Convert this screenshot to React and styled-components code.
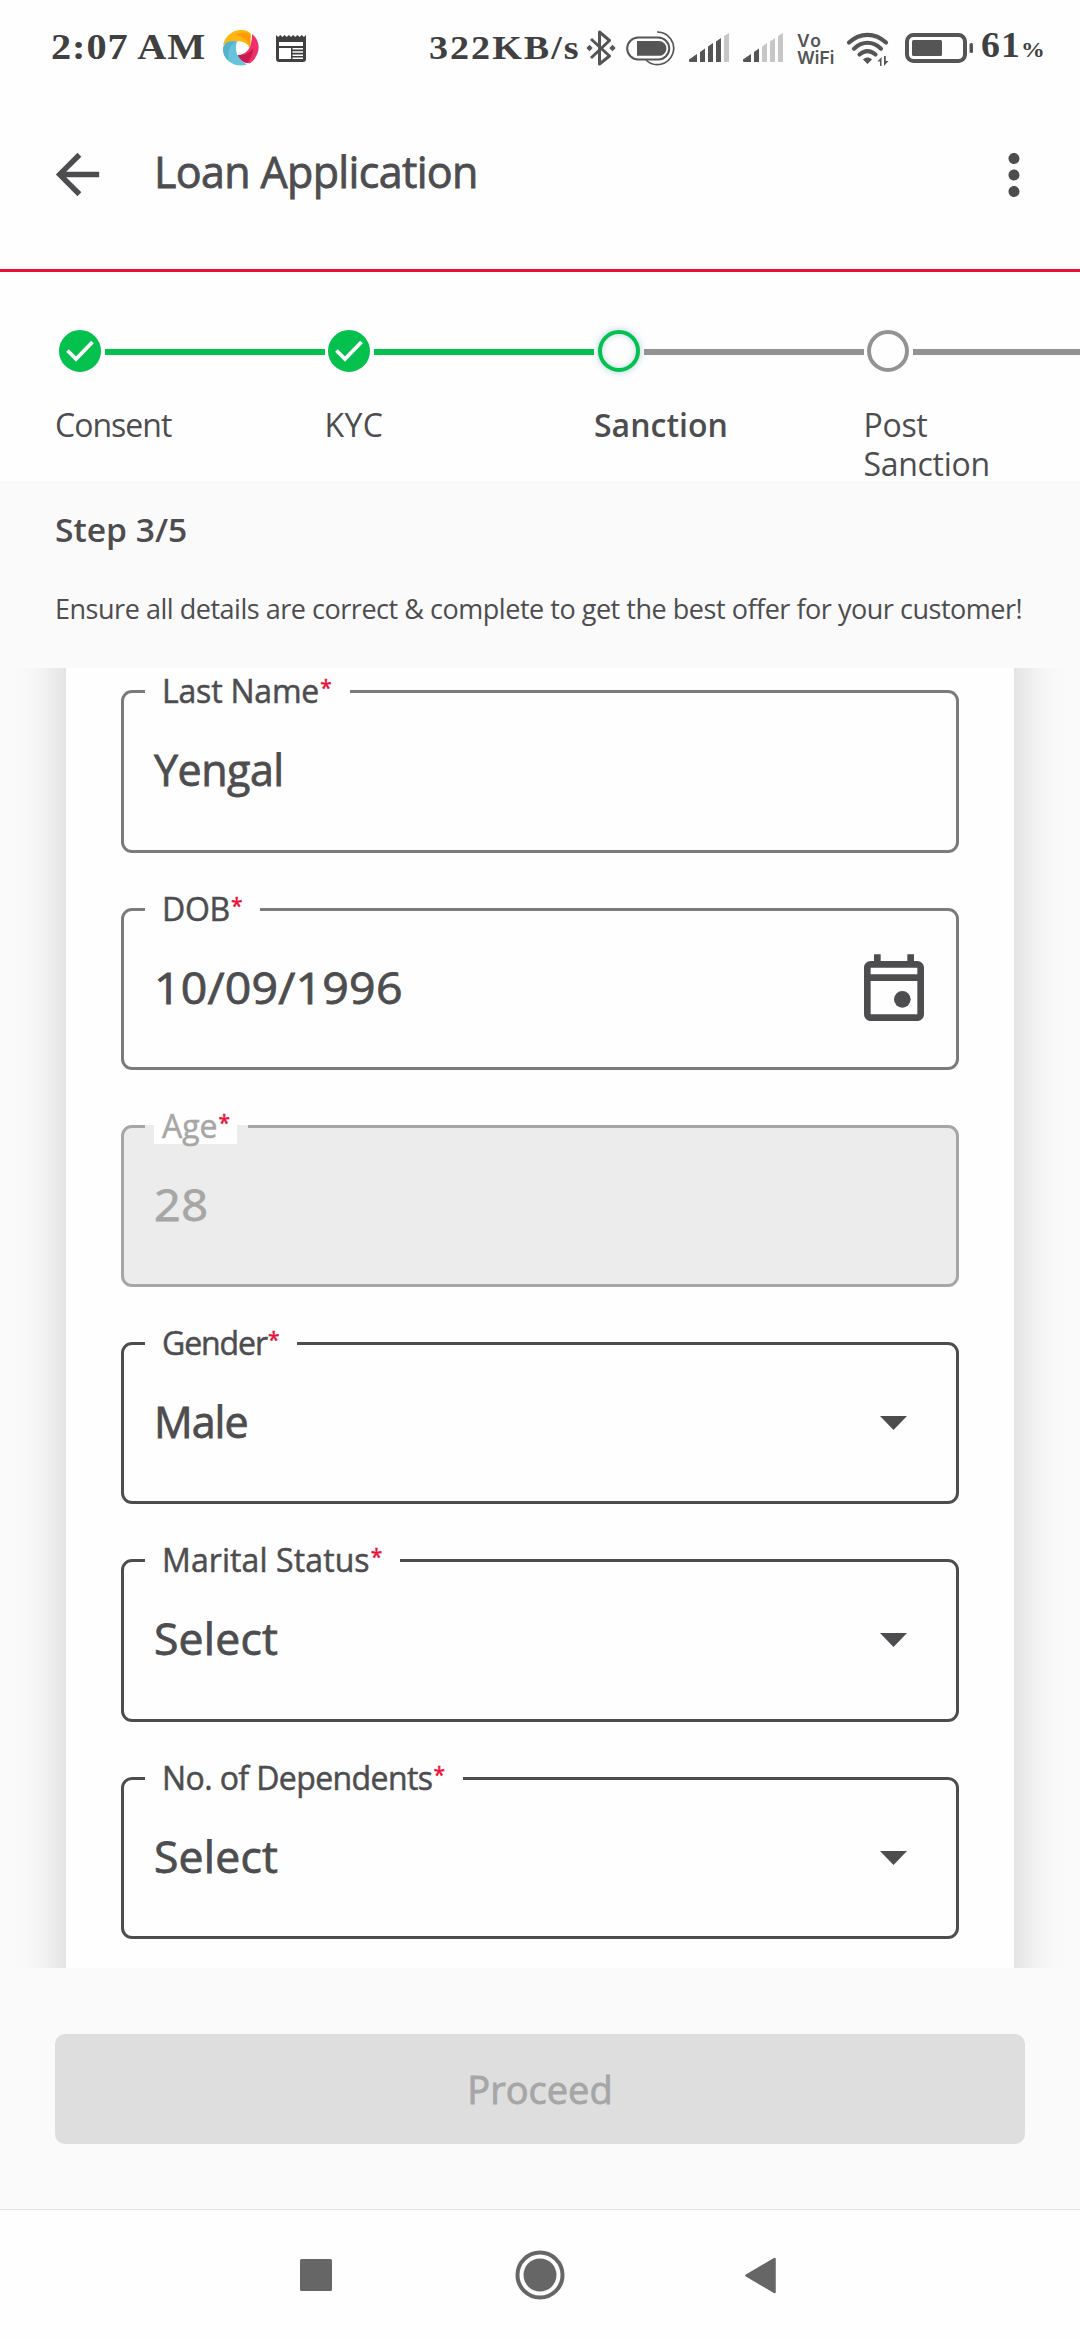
import React from "react";
import styled, { createGlobalStyle } from "styled-components";
import { MdArrowBack, MdMoreVert } from "react-icons/md";

const GREEN = "#04c14e";
const GREY = "#939393";
const INK = "#4d4d4f";
const RED = "#ea1139";

const GlobalStyle = createGlobalStyle`
  * { box-sizing: border-box; }
  body {
    margin: 0;
    background: #fafafa;
    color: ${INK};
    font-family: "Open Sans", "Noto Sans", sans-serif;
    overflow: hidden;
  }
  svg { display: block; flex: none; }
`;

const Screen = styled.div`
  width: 1080px;
  height: 2340px;
  display: flex;
  flex-direction: column;
  overflow: hidden;
`;

/* ---------- status bar ---------- */

const StatusBar = styled.header`
  flex: none;
  height: 95px;
  display: flex;
  align-items: center;
  background: #fefefe;
`;

const StatusText = styled.span`
  flex: none;
  width: ${(p) => p.$width}px;
  margin-left: ${(p) => p.$gap}px;
  font: 700 ${(p) => p.$size}px/95px "Liberation Serif", serif;
  letter-spacing: ${(p) => p.$track}px;
  white-space: nowrap;
  color: #404040;
`;

const Wide = styled.span`
  display: inline-block;
  transform: scaleX(${(p) => p.$stretch});
  transform-origin: left center;
`;

const Percent = styled.small`
  font-size: 22px;
  letter-spacing: 0;
`;

const StatusIcon = styled.span`
  flex: none;
  display: flex;
  margin-left: ${(p) => p.$gap}px;
  margin-top: ${(p) => p.$drop || 0}px;
`;

const VoWifi = styled.span`
  flex: none;
  display: flex;
  flex-direction: column;
  width: 38px;
  margin-left: 14px;
  margin-top: 3px;
  font: 600 17.5px/17px Inter, sans-serif;
  color: #555;
`;

const VoLine = styled.span`
  letter-spacing: ${(p) => p.$track}px;
`;

function Swirl() {
  return (
    <svg width="36" height="36" viewBox="0 0 36 36">
      <path d="M0 15.500C2 6 9.500 0 18 0c5 0 8.500 1.500 9.800 4.200L27 18c-2.500-4.500-8-7.500-13-6.500C9 11 4 12.500 0 15.500Z" fill="#fdb614" />
      <path d="M12 5c6-3 11-3.500 15.700-.5L27 18c-1-7-7-12-15-13Z" fill="#ff9c05" />
      <path d="M29 4c5 3.500 7.500 10 6.300 16.500C34 26 30.500 31 27 33.200c-5 .3-10.500-2.700-12.500-8.200C21 25.500 27 20 28 13c.8-3 1.200-6 1-9Z" fill="#ee3169" />
      <path d="M14.500 25c6 1 12-1.500 16-7-1 6-3 11-6 15-4-.5-8.500-3.500-10-8Z" fill="#c91a4d" />
      <path d="M0 19c0-2.500 1.500-5 4-6.500 3-1.500 6.500-1.500 10-1-1.500 4-1.500 9 .5 13.500 2 4 5 7 9.500 9.500C14 38 0 32 0 19Z" fill="#67c3dc" />
      <path d="M0 19c0-2.500 1.500-5 4-6.500 3-1.500 6.500-1.500 10-1-6 2-9.500 7.500-8.500 19C2 28 0 24 0 19Z" fill="#52b3cb" />
    </svg>
  );
}

function Newspaper() {
  return (
    <svg width="30" height="29" viewBox="0 0 30 29">
      <path d="M0 1l2.100 2L4.300 1l2.100 2L8.600 1l2.100 2 2.200-2L15 3l2.100-2 2.200 2 2.100-2 2.200 2 2.100-2 2.200 2L30 1v24a3 3 0 0 1-3 3H3a3 3 0 0 1-3-3Z" fill="#404040" />
      <path d="M3 8h24v4H3ZM3 14h12v11H3ZM16.500 14H27v1.600H16.500ZM16.500 17.200H27v1.600H16.500ZM16.500 20.400H27V22H16.500ZM16.500 23.500H27V25H16.500Z" fill="#fefefe" />
    </svg>
  );
}

function Bluetooth() {
  return (
    <svg width="30" height="36" viewBox="0 0 30 36">
      <path d="M5 9l18.500 17L13.500 34V2l10 8.500L5 28" fill="none" stroke="#555" strokeWidth="3" strokeLinejoin="round" />
      <path d="M3.500 14.800 6.700 18l-3.200 3.200L.3 18ZM26.500 14.800l3.200 3.200-3.200 3.200-3.200-3.200Z" fill="#555" />
    </svg>
  );
}

function PillToggle() {
  return (
    <svg width="50" height="36" viewBox="0 0 50 36">
      <rect x="1.200" y="7.500" width="42" height="22" rx="11" fill="none" stroke="#555" strokeWidth="2" />
      <path d="M11 11h22a7.300 7.300 0 0 1 0 14.800H11Z" fill="#555" />
      <path d="M31 2a16.300 16.300 0 1 1-11 28" fill="none" stroke="#555" strokeWidth="1.700" />
    </svg>
  );
}

const BARS = [
  "M0 28.500v-2L8 21v8H1Z",
  "M11 29V19l5-3.500V29Z",
  "M19 29V13.500l5-3.500V29Z",
  "M27 29V8.500L32 5v24Z",
  "M35 29V3l5-3v29Z",
];

function Signal({ level }) {
  return (
    <svg width="40" height="29" viewBox="0 0 40 29">
      {BARS.map((d, i) => (
        <path key={d} d={d} fill={i < level ? "#555" : "#c6c6c6"} />
      ))}
    </svg>
  );
}

function Wifi() {
  return (
    <svg width="44" height="35" viewBox="0 0 44 35">
      <g fill="none" stroke="#555" strokeWidth="4.200" strokeLinecap="round">
        <path d="M3 10.500c11-10.300 26-10.300 37 0" />
        <path d="M8 16.700c8.500-7.700 18.500-7.700 27 0" />
        <path d="M13.500 22.500c5.500-4.600 10.500-4.600 16 0" />
      </g>
      <path d="M17 27.500c3-2.600 6-2.600 9 0L21.500 32Z" fill="#555" />
      <path d="M35.500 34v-9L31.500 29.500h2.500V34ZM38 24v10l4.500-5H39.800v-5Z" fill="#555" />
    </svg>
  );
}

function Battery() {
  return (
    <svg width="69" height="30" viewBox="0 0 69 30">
      <rect x="2" y="2" width="58" height="26" rx="6.500" fill="none" stroke="#555" strokeWidth="4" />
      <rect x="7" y="7" width="30" height="16" rx="1.500" fill="#555" />
      <rect x="64.500" y="10" width="3.500" height="10" rx="1.500" fill="#555" />
    </svg>
  );
}

/* ---------- toolbar ---------- */

const Toolbar = styled.div`
  flex: none;
  height: 177px;
  display: flex;
  align-items: center;
  padding: 0 33px 15px 45px;
  background: #fefefe;
  border-bottom: 3px solid ${RED};
`;

const IconButton = styled.button`
  display: flex;
  padding: 0;
  border: 0;
  background: none;
  color: ${INK};
`;

const Title = styled.h1`
  flex: 1;
  margin: 0 0 6px 44px;
  font-size: 43px;
  font-weight: 400;
  line-height: 60px;
  letter-spacing: -0.65px;
  -webkit-text-stroke: 0.8px ${INK};
`;

/* ---------- stepper ---------- */

const Stepper = styled.ol`
  flex: none;
  height: 209px;
  margin: 0;
  padding: 58px 0 0 55px;
  display: flex;
  list-style: none;
  background: #fefefe;
`;

const Step = styled.li`
  flex: none;
  width: 269.5px;
`;

const StepHead = styled.div`
  display: flex;
  align-items: center;
  height: 42px;
`;

const StepDot = styled.span`
  flex: none;
  width: 42px;
  height: 42px;
  margin: 0 3.750px;
  border-radius: 50%;
  display: flex;
  align-items: center;
  justify-content: center;
  border: 4px solid ${(p) => (p.$state === "todo" ? GREY : GREEN)};
  background: ${(p) => (p.$state === "done" ? GREEN : "#fefefe")};
  box-shadow: ${(p) =>
    p.$state === "current" ? "0 0 7px rgba(20,110,160,.35), inset 0 0 6px rgba(20,90,160,.25)" : "none"};
`;

const StepLine = styled.span`
  flex: 1;
  height: 6px;
  margin-top: 2px;
  background: ${(p) => (p.$done ? GREEN : GREY)};
`;

const StepLabel = styled.div`
  width: 140px;
  margin-top: 33px;
  font-size: 32px;
  line-height: 39px;
  font-weight: ${(p) => (p.$current ? 600 : 400)};
  letter-spacing: ${(p) => p.$track}px;
`;

const STEPS = [
  { label: "Consent", state: "done", track: -1 },
  { label: "KYC", state: "done", track: 0.4 },
  { label: "Sanction", state: "current", track: 0 },
  { label: "Post Sanction", state: "todo", track: -0.3 },
];

function Check() {
  return (
    <svg width="30" height="24" viewBox="0 0 30 24">
      <path d="M2.500 11.500 11 20 27.500 3" fill="none" stroke="#fefefe" strokeWidth="3.800" />
    </svg>
  );
}

/* ---------- intro ---------- */

const Intro = styled.section`
  flex: none;
  height: 187px;
  padding: 29px 0 0 55px;
  background: #fafafa;
`;

const StepCount = styled.h2`
  margin: 0 0 41px;
  font-size: 32px;
  line-height: 40px;
  font-weight: 600;
`;

const Hint = styled.p`
  margin: 0;
  font-size: 27px;
  line-height: 36px;
  letter-spacing: -0.47px;
  white-space: nowrap;
`;

/* ---------- form ---------- */

const ScrollArea = styled.main`
  flex: none;
  height: 1299.7px;
  padding: 0 66px;
  overflow: hidden;
  background: #fafafa;
`;

const Card = styled.form`
  margin: -60px 0;
  padding: 66.4px 55px 120px;
  background: #fefefe;
  box-shadow: 0 0 48px rgba(0, 0, 0, 0.18);
`;

const TONES = { input: "#7b7b7b", disabled: "#a6a6a6", select: "#4d4d4f" };

const FieldBox = styled.fieldset`
  height: 178.3px;
  min-width: 0;
  margin: 0 0 38.950px;
  padding: 0 0 0 20.500px;
  border: 3px solid ${(p) => TONES[p.$tone]};
  border-radius: 11px;
  background: ${(p) => (p.$tone === "disabled" ? "#ececec" : "#fefefe")};
  color: ${(p) => (p.$tone === "disabled" ? "#a6a6a6" : INK)};
`;

const Legend = styled.legend`
  padding: 0 11px 0 9.500px;
`;

const LabelText = styled.span`
  display: flex;
  height: 35px;
  padding: 1px 7px 0 8px;
  background: #fefefe;
  font-size: 32px;
  line-height: 32px;
  letter-spacing: ${(p) => p.$track}px;
  -webkit-text-stroke: 0.5px currentColor;
`;

const Required = styled.sup`
  margin-left: 1px;
  font-size: 21px;
  line-height: 24px;
  letter-spacing: 0;
  color: ${RED};
`;

const ValueRow = styled.div`
  height: 120px;
  margin-left: 9.500px;
  padding-top: 2px;
  display: flex;
  align-items: center;
  justify-content: space-between;
`;

const Value = styled.span`
  font-size: 43px;
  line-height: 60px;
  letter-spacing: ${(p) => p.$track}px;
  transform: scaleX(${(p) => p.$stretch});
  transform-origin: left center;
  -webkit-text-stroke: 0.8px currentColor;
`;

const TrailingIcon = styled.span`
  display: flex;
  margin-top: ${(p) => p.$drop}px;
  margin-right: ${(p) => p.$inset}px;
`;

function CalendarIcon() {
  return (
    <TrailingIcon $drop={7} $inset={22.5}>
      <svg width="80" height="80" viewBox="0 0 24 24">
        <path
          fillRule="evenodd"
          fill={INK}
          d="M6 1h2v2h8V1h2v2h1c1.100 0 2 .9 2 2v14c0 1.100-.9 2-2 2H5c-1.100 0-2-.9-2-2V5c0-1.100.9-2 2-2h1ZM5 5v2h14V5ZM5 9v10h14V9Z"
        />
        <circle cx="14.500" cy="14.500" r="2.500" fill={INK} />
      </svg>
    </TrailingIcon>
  );
}

function CaretIcon() {
  return (
    <TrailingIcon $drop={2} $inset={49.5}>
      <svg width="27" height="14" viewBox="0 0 27 14">
        <path d="M0 0h27L13.500 14Z" fill={INK} />
      </svg>
    </TrailingIcon>
  );
}

const FIELDS = [
  { label: "Last Name", value: "Yengal", tone: "input", lt: -0.2, vt: -0.5 },
  { label: "DOB", value: "10/09/1996", tone: "input", lt: -0.3, vt: 0.2, stretch: 1.08, icon: "calendar" },
  { label: "Age", value: "28", tone: "disabled", lt: 0, vt: 0.5, stretch: 1.09 },
  { label: "Gender", value: "Male", tone: "select", lt: -1.1, vt: -1, icon: "caret" },
  { label: "Marital Status", value: "Select", tone: "select", lt: 0.1, vt: 0.2, stretch: 1.035, icon: "caret" },
  { label: "No. of Dependents", value: "Select", tone: "select", lt: -0.6, vt: 0.2, stretch: 1.035, icon: "caret" },
];

function Field({ label, value, tone, lt, vt, stretch = 1, icon }) {
  return (
    <FieldBox $tone={tone}>
      <Legend>
        <LabelText $track={lt}>
          {label}
          <Required>*</Required>
        </LabelText>
      </Legend>
      <ValueRow>
        <Value $track={vt} $stretch={stretch}>
          {value}
        </Value>
        {icon === "calendar" && <CalendarIcon />}
        {icon === "caret" && <CaretIcon />}
      </ValueRow>
    </FieldBox>
  );
}

/* ---------- footer and navigation ---------- */

const Footer = styled.footer`
  flex: 1;
  padding: 66px 55px 0;
  background: #fafafa;
`;

const Proceed = styled.button`
  display: block;
  width: 100%;
  height: 110px;
  padding: 1px 0 0;
  border: 0;
  border-radius: 10px;
  background: #dedede;
  color: #a6a6a6;
  font: 400 38px/60px "Open Sans", sans-serif;
  -webkit-text-stroke: 0.8px #a6a6a6;
`;

const NavBar = styled.nav`
  flex: none;
  height: 131px;
  display: flex;
  align-items: center;
  padding-left: 300px;
  border-top: 1px solid #e2e2e2;
  background: #fefefe;
`;

const NavItem = styled.span`
  display: flex;
  margin-left: ${(p) => p.$gap}px;
`;

export default function App() {
  return (
    <Screen>
      <GlobalStyle />
      <StatusBar>
        <StatusText $gap={51} $width={172} $size={36} $track={0.8}>
          <Wide $stretch={1.12}>2:07 AM</Wide>
        </StatusText>
        <StatusIcon $gap={0}>
          <Swirl />
        </StatusIcon>
        <StatusIcon $gap={17} $drop={2}>
          <Newspaper />
        </StatusIcon>
        <StatusText $gap={123} $width={156.5} $size={34} $track={1.8}>
          <Wide $stretch={1.12}>322KB/s</Wide>
        </StatusText>
        <StatusIcon $gap={0}>
          <Bluetooth />
        </StatusIcon>
        <StatusIcon $gap={10.5}>
          <PillToggle />
        </StatusIcon>
        <StatusIcon $gap={13}>
          <Signal level={4} />
        </StatusIcon>
        <StatusIcon $gap={14}>
          <Signal level={2} />
        </StatusIcon>
        <VoWifi>
          <VoLine $track={1.5}>Vo</VoLine>
          <VoLine $track={0}>WiFi</VoLine>
        </VoWifi>
        <StatusIcon $gap={11} $drop={4}>
          <Wifi />
        </StatusIcon>
        <StatusIcon $gap={15} $drop={1}>
          <Battery />
        </StatusIcon>
        <StatusText $gap={7} $width={70} $size={35} $track={1}>
          <Wide $stretch={1.08}>
            61<Percent>%</Percent>
          </Wide>
        </StatusText>
      </StatusBar>

      <Toolbar>
        <IconButton aria-label="Back">
          <MdArrowBack size={65} />
        </IconButton>
        <Title>Loan Application</Title>
        <IconButton aria-label="More options">
          <MdMoreVert size={66} />
        </IconButton>
      </Toolbar>

      <Stepper>
        {STEPS.map(({ label, state, track }) => (
          <Step key={label}>
            <StepHead>
              <StepDot $state={state}>{state === "done" && <Check />}</StepDot>
              <StepLine $done={state === "done"} />
            </StepHead>
            <StepLabel $current={state === "current"} $track={track}>
              {label}
            </StepLabel>
          </Step>
        ))}
      </Stepper>

      <Intro>
        <StepCount>
          <Wide $stretch={1.05}>Step 3/5</Wide>
        </StepCount>
        <Hint>Ensure all details are correct &amp; complete to get the best offer for your customer!</Hint>
      </Intro>

      <ScrollArea>
        <Card>
          {FIELDS.map((field) => (
            <Field key={field.label} {...field} />
          ))}
        </Card>
      </ScrollArea>

      <Footer>
        <Proceed disabled>Proceed</Proceed>
      </Footer>

      <NavBar>
        <NavItem $gap={0}>
          <svg width="32" height="32" viewBox="0 0 32 32">
            <rect width="32" height="32" rx="1.500" fill="#666" />
          </svg>
        </NavItem>
        <NavItem $gap={183}>
          <svg width="50" height="50" viewBox="0 0 50 50">
            <circle cx="25" cy="25" r="22.500" fill="none" stroke="#666" strokeWidth="4" />
            <circle cx="25" cy="25" r="16.500" fill="#666" />
          </svg>
        </NavItem>
        <NavItem $gap={180}>
          <svg width="31" height="37" viewBox="0 0 31 37">
            <path d="M1.500 18.500 29.500 2v33Z" fill="#666" stroke="#666" strokeWidth="2.500" strokeLinejoin="round" />
          </svg>
        </NavItem>
      </NavBar>
    </Screen>
  );
}
